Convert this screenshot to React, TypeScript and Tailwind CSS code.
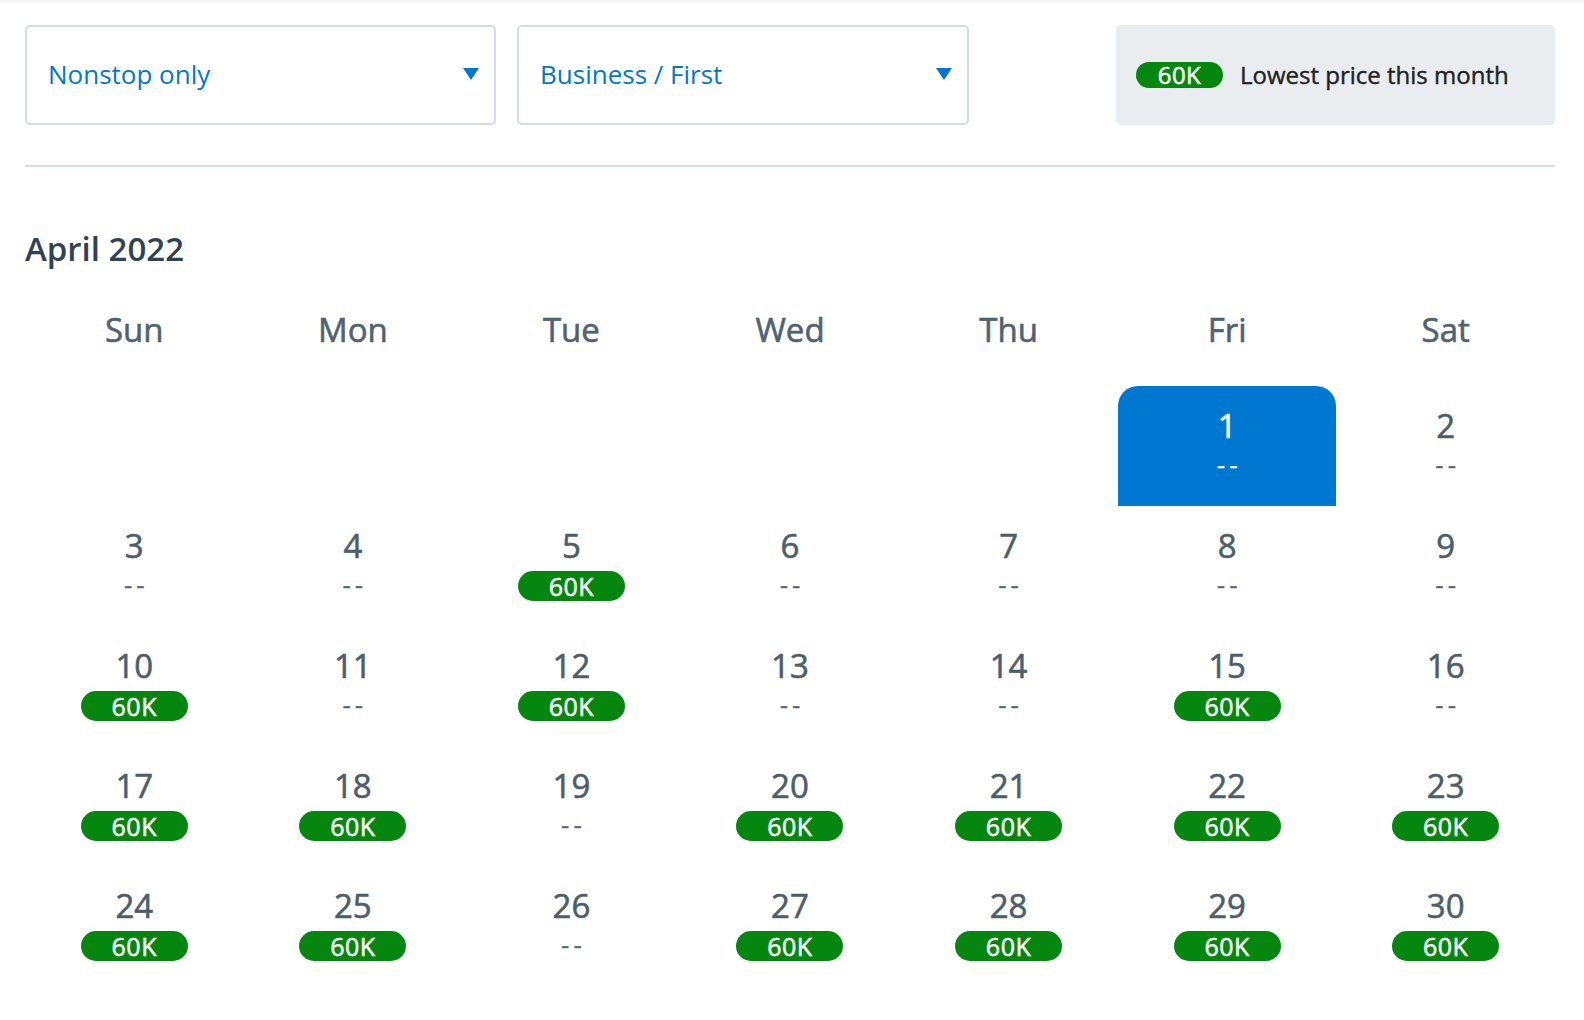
import React from "react";

const days = ["Sun", "Mon", "Tue", "Wed", "Thu", "Fri", "Sat"];
const priced = new Set([5, 10, 12, 15, 17, 18, 20, 21, 22, 23, 24, 25, 27, 28, 29, 30]);

function Badge({ small }: { small?: boolean }) {
  return (
    <span
      className={
        small
          ? "inline-flex items-center justify-center w-[87px] h-[26px] rounded-full bg-[#05870f] text-white text-[24px] leading-none tracking-[0.5px] [-webkit-text-stroke:0.5px_currentColor]"
          : "inline-flex items-center justify-center w-[107px] h-[30px] rounded-full bg-[#05870f] text-white text-[25px] leading-none tracking-[0.5px] [-webkit-text-stroke:0.5px_currentColor]"
      }
    >
      60K
    </span>
  );
}

function Dropdown({ label, width }: { label: string; width: string }) {
  return (
    <div
      className={`${width} h-[100px] border-2 border-[#d5dde4] rounded-[5px] flex items-center justify-between pl-[21px] pr-[15px] pb-[3px]`}
    >
      <span className="text-[26px] text-[#0078d2] leading-none">{label}</span>
      <svg width="16" height="12" viewBox="0 0 16 12" className="mt-[1px]">
        <polygon points="0,0 16,0 8,12" fill="#0078d2" />
      </svg>
    </div>
  );
}

export default function App() {
  const cells: (number | null)[] = [null, null, null, null, null];
  for (let d = 1; d <= 30; d++) cells.push(d);

  return (
    <div
      className="w-[1584px] h-[1020px] bg-white overflow-hidden relative"
      style={{ fontFamily: '"Open Sans", "Noto Sans", sans-serif' }}
    >
      <div className="absolute top-0 left-0 right-0 h-[6px] bg-gradient-to-b from-[#f3f3f3] to-white" />
      <div className="relative pl-[25px] w-[1555px]">
        <div className="pt-[25px] flex items-start">
          <Dropdown label="Nonstop only" width="w-[471px]" />
          <div className="ml-[21px]">
            <Dropdown label="Business / First" width="w-[452px]" />
          </div>
          <div className="ml-auto w-[439px] h-[100px] bg-[#e9edef] rounded-[5px] flex items-center pl-[20px]">
            <Badge small />
            <span className="ml-[17px] text-[24px] text-[#222222] leading-none [-webkit-text-stroke:0.4px_currentColor]">
              Lowest price this month
            </span>
          </div>
        </div>
        <div className="mt-[40px] h-[2px] bg-[#d5dee5]" />
        <h2 className="mt-[62px] text-[33px] leading-[40px] font-semibold text-[#2f4256]">
          April 2022
        </h2>
        <div className="mt-[41px] grid grid-cols-7">
          {days.map((d) => (
            <div
              key={d}
              className="text-center text-[33px] leading-[40px] text-[#4f6373] [-webkit-text-stroke:0.6px_currentColor]"
            >
              {d}
            </div>
          ))}
        </div>
        <div className="mt-[36px] grid grid-cols-7">
          {cells.map((d, i) => {
            if (d === null) return <div key={i} className="h-[120px]" />;
            const sel = d === 1;
            return (
              <div
                key={i}
                className={`h-[120px] flex flex-col items-center pt-[20px] ${
                  sel ? "bg-[#0078d2] rounded-t-[20px]" : ""
                }`}
              >
                <div
                  className={`text-[33px] leading-[40px] [-webkit-text-stroke:0.6px_currentColor] ${
                    sel ? "text-white" : "text-[#4b5e6c]"
                  }`}
                >
                  {d}
                </div>
                <div className="mt-[5px] h-[30px] flex items-center justify-center">
                  {priced.has(d) ? (
                    <Badge />
                  ) : (
                    <span
                      className={`mb-[4px] text-[26px] leading-none tracking-[4px] pl-[4px] [-webkit-text-stroke:0.3px_currentColor] ${
                        sel ? "text-white" : "text-[#5a6b78]"
                      }`}
                    >
                      --
                    </span>
                  )}
                </div>
              </div>
            );
          })}
        </div>
      </div>
    </div>
  );
}
